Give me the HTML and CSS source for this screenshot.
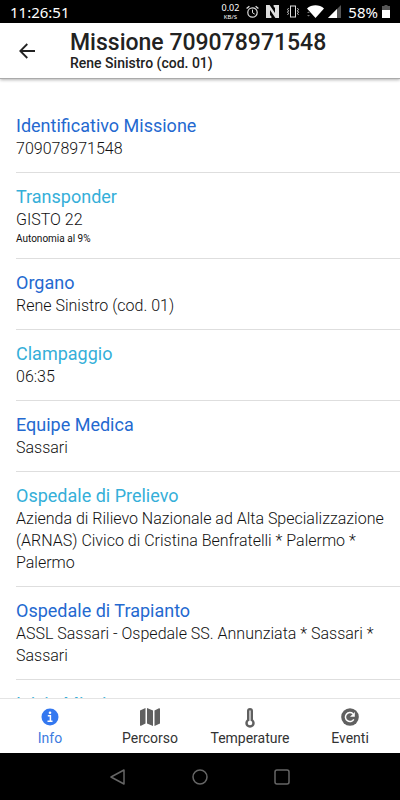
FILE: index.html
```
<!DOCTYPE html>
<html lang="it">
<head>
  <meta charset="UTF-8">
  <meta name="viewport" content="width=device-width, initial-scale=1.0">
  <title>Missione 709078971548</title>
  <link rel="stylesheet" href="styles.css">
</head>
<body>
  <div class="statusbar">
    <span class="clock">11:26:51</span>
    <span class="speed"><span>0.02</span><small>KB/S</small></span>
    <svg class="alarm" width="13" height="14" viewBox="0 0 13 14" fill="none" stroke="#ddd">
      <circle cx="6.5" cy="7.5" r="4.7" stroke-width="1.2"/>
      <path d="M.6 3.6 3.4 1.2M12.4 3.6 9.6 1.2" stroke-width="1.3"/>
      <path d="M6.5 4.6v3.2l2.2 1.3"/>
    </svg>
    <svg class="nfc" width="13" height="13" viewBox="0 0 13 13">
      <path fill="#ddd" d="M0 0h3.600l5.400 8V3L7.600 1.500V0H13v13H9.400L4 5v5l1.400 1.500V13H0z"/>
    </svg>
    <svg class="vibrate" width="14" height="13" viewBox="0 0 14 13" fill="none" stroke="#ddd">
      <rect x="4.5" y="1" width="5" height="11"/>
      <path d="M2.5 3.2 1.6 4.5l.9 1.3-.9 1.4.9 1.3-.9 1.3M11.5 3.2l.9 1.3-.9 1.3.9 1.4-.9 1.3.9 1.3"/>
    </svg>
    <svg class="wifi" width="17" height="13" viewBox="0 0 17 13" fill="#fff">
      <path d="M0 3.5C4.5-.7 12.5-.7 17 3.5L8.500 13z"/>
      <path fill="#777" d="M0 8l1.500-1.500L3 8zM0 10h3l-1.500 1.500z"/>
    </svg>
    <svg class="signal" width="13" height="13" viewBox="0 0 13 13">
      <path fill="#555" d="M13 0v13H0z"/>
      <path fill="#fff" d="M9 4v9H0z"/>
    </svg>
    <span class="percent">58%</span>
    <svg class="battery" width="8" height="13" viewBox="0 0 8 13">
      <path fill="#555" d="M2.500 0h3v1H8v4H0V1h2.500z"/>
      <path fill="#fff" d="M0 5h8v8H0z"/>
    </svg>
  </div>

  <header class="header">
    <button class="back" aria-label="Indietro">
      <svg width="16" height="16" viewBox="0 0 16 16" fill="none" stroke="#222" stroke-width="1.8">
        <path d="M16 8H1.500M8.300 1 1.300 8l7 7"/>
      </svg>
    </button>
    <div>
      <h1>Missione 709078971548</h1>
      <p>Rene Sinistro (cod. 01)</p>
    </div>
  </header>

  <main class="content">
    <section class="item">
      <h2>Identificativo Missione</h2>
      <p>709078971548</p>
    </section>
    <section class="item">
      <h2>Transponder</h2>
      <p>GISTO 22</p>
      <p class="note">Autonomia al 9%</p>
    </section>
    <section class="item">
      <h2>Organo</h2>
      <p>Rene Sinistro (cod. 01)</p>
    </section>
    <section class="item">
      <h2>Clampaggio</h2>
      <p>06:35</p>
    </section>
    <section class="item">
      <h2>Equipe Medica</h2>
      <p>Sassari</p>
    </section>
    <section class="item">
      <h2>Ospedale di Prelievo</h2>
      <p>Azienda di Rilievo Nazionale ad Alta Specializzazione (ARNAS) Civico di Cristina Benfratelli * Palermo * Palermo</p>
    </section>
    <section class="item">
      <h2>Ospedale di Trapianto</h2>
      <p>ASSL Sassari - Ospedale SS. Annunziata * Sassari * Sassari</p>
    </section>
    <section class="item">
      <h2>Inizio Missione</h2>
    </section>
  </main>

  <nav class="tabs">
    <a class="tab active" href="#info">
      <svg width="18" height="18" viewBox="0 0 18 18">
        <circle cx="9" cy="9" r="8.500" fill="#3478f0"/>
        <circle cx="9" cy="4.800" r="1.300" fill="#fff"/>
        <path d="M6.800 7.800h2.600v5M6.500 13.200h5" fill="none" stroke="#fff" stroke-width="1.500"/>
      </svg>
      Info
    </a>
    <a class="tab" href="#percorso">
      <svg width="20" height="18" viewBox="0 0 20 18" fill="#606060">
        <path d="M0 2.500 5.500 0v15.500L1 17.800q-1 .3-1-.8zM7 0l6 2.500V18l-6-2.500zM14.500 2.500 19 .2q1-.3 1 .8v14.500L14.500 18z"/>
      </svg>
      Percorso
    </a>
    <a class="tab" href="#temperature">
      <svg width="12" height="20" viewBox="0 0 12 20">
        <path fill="#606060" d="M3 3a3 3 0 0 1 6 0v8.500a4.700 4.700 0 1 1-6 0z"/>
        <path d="M6 3v10" stroke="#ddd" stroke-width="1.500" stroke-linecap="round"/>
        <circle cx="6" cy="15" r="2.300" fill="#fff"/>
      </svg>
      Temperature
    </a>
    <a class="tab" href="#eventi">
      <svg width="18" height="18" viewBox="0 0 18 18">
        <circle cx="9" cy="9" r="8.800" fill="#606060"/>
        <path d="M12.800 11.300A4.500 4.500 0 1 1 12 5.700" fill="none" stroke="#fff" stroke-width="1.500"/>
        <path d="M13.800 4v4.800H9z" fill="#fff"/>
      </svg>
      Eventi
    </a>
  </nav>

  <div class="sysnav">
    <button aria-label="Indietro">
      <svg width="18" height="18" viewBox="0 0 18 18"><path d="M15 2v14L2 9z"/></svg>
    </button>
    <button aria-label="Home">
      <svg width="18" height="18" viewBox="0 0 18 18"><circle cx="9" cy="9" r="7"/></svg>
    </button>
    <button aria-label="Recenti">
      <svg width="18" height="18" viewBox="0 0 18 18"><rect x="2" y="2" width="14" height="14" rx="2"/></svg>
    </button>
  </div>
</body>
</html>
```

FILE: styles.css
```
* {
  box-sizing: border-box;
}
body {
  display: flex;
  flex-direction: column;
  height: 100vh;
  margin: 0;
  font-family: Roboto, sans-serif;
  background: #fff;
  color: #222;
}
h1, h2, p {
  margin: 0;
}
button {
  padding: 0;
  border: 0;
  background: none;
}
svg {
  display: block;
  flex: none;
}
.statusbar {
  display: flex;
  align-items: center;
  gap: 7px;
  height: 23px;
  padding: 0 10px;
  background: #000;
  color: #fff;
  font-family: "Noto Sans", sans-serif;
  font-size: 15px;
}
.clock {
  margin-right: auto;
}
.speed {
  display: flex;
  flex-direction: column;
  align-items: center;
  font-size: 9px;
  line-height: 10px;
}
.speed small {
  font-size: 6px;
  line-height: 8px;
}
.wifi {
  margin-right: -3px;
}
.percent {
  margin-right: -3px;
}
.header {
  display: flex;
  align-items: center;
  height: 56px;
  padding: 0 19px;
  gap: 35px;
  border-bottom: 1px solid #aaa;
  box-shadow: 0 1px 3px rgba(0, 0, 0, 0.3);
}
.header h1 {
  font-size: 23px;
  line-height: 25px;
  font-weight: 500;
}
.header p {
  font-size: 14px;
  line-height: 17px;
  font-weight: 500;
}
.content {
  flex: 1;
  min-height: 0;
  overflow: hidden;
  padding: 23px 0 0 16px;
}
.item {
  padding: 12px 4px 12px 0;
  border-bottom: 1px solid #dedede;
  font-size: 16px;
  line-height: 22px;
  font-weight: 300;
  color: #111;
}
.item h2 {
  font-size: 18px;
  line-height: 24px;
  font-weight: 400;
  color: #2469d0;
}
.item:nth-child(even) h2 {
  color: #35afd9;
}
.item .note {
  padding-top: 1px;
  font-size: 10px;
  line-height: 14px;
  font-weight: 400;
}
.tabs {
  display: grid;
  grid-template-columns: repeat(4, 1fr);
  height: 55px;
  border-top: 1px solid #e4e4e4;
}
.tab {
  display: flex;
  flex-direction: column;
  align-items: center;
  justify-content: space-between;
  padding: 9px 0 7px;
  color: #333;
  font-size: 14px;
  line-height: 16px;
  text-decoration: none;
}
.tab.active {
  color: #3d7be0;
}
.sysnav {
  display: flex;
  align-items: center;
  justify-content: center;
  gap: 64px;
  height: 47px;
  background: #000;
}
.sysnav svg {
  fill: none;
  stroke: #666;
  stroke-width: 1.5;
  stroke-linejoin: round;
}
```
